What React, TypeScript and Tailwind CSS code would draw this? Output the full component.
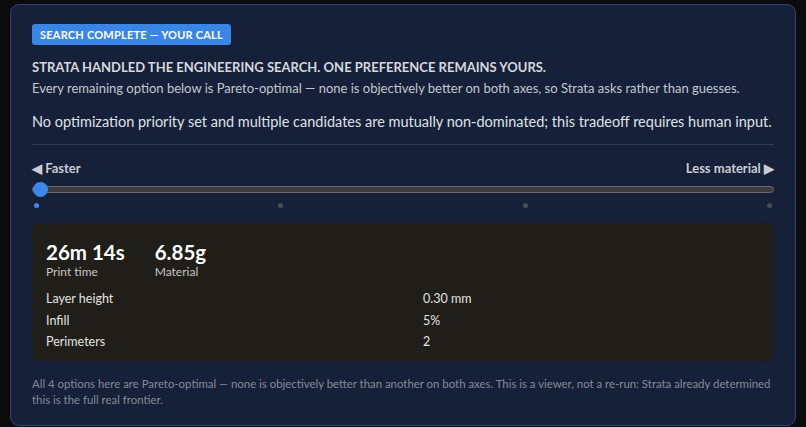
import React from "react";

const FONT = { fontFamily: 'Lato, "Noto Sans", sans-serif' };

const TICKS = [0, 1, 2, 3];

const PARAMS: [label: string, value: string][] = [
  ["Layer height", "0.30 mm"],
  ["Infill", "5%"],
  ["Perimeters", "2"],
];

export default function App() {
  return (
    <div className="h-[427px] overflow-hidden bg-[#0b0b0c] px-[10px] pt-[4px]" style={FONT}>
      <div className="rounded-[9px] border border-[#2c4670] bg-[#172039] px-[21px] pb-[17px] pt-[19px]">
        <span className="block w-fit rounded-[3px] bg-[#3a86e4] px-[8px] py-[4px] text-[11px] font-bold uppercase leading-[13px] tracking-[0.02em] text-white">
          Search complete — your call
        </span>

        <h2 className="mt-[13px] text-[13px] font-bold uppercase leading-[18px] text-[#d6d8dc]">
          Strata handled the engineering search. One preference remains yours.
        </h2>
        <p className="mt-[3px] text-[13px] leading-[18px] text-[#c3c7ce]">
          Every remaining option below is Pareto-optimal — none is objectively
          better on both axes, so Strata asks rather than guesses.
        </p>
        <p className="mt-[15px] whitespace-nowrap text-[14.5px] leading-[20px] text-[#dfe2e6]">
          No optimization priority set and multiple candidates are mutually
          non-dominated; this tradeoff requires human input.
        </p>

        <div className="mt-[12px] border-t border-[#2e3a52]" />

        <div className="mt-[14px] flex items-center justify-between text-[13px] font-bold leading-[18px] text-[#c9ccd2]">
          <span>◀ Faster</span>
          <span>Less material ▶</span>
        </div>

        <div className="relative mt-[5px] h-[15px]">
          <div className="absolute left-0 right-0 top-[4px] h-[7px] rounded-full border border-[#6b6b6b] bg-[#3d3d3d]" />
          <div className="absolute left-[1px] top-0 h-[15px] w-[15px] rounded-full bg-[#3b87ea]" />
        </div>

        <div className="mt-[6px] flex justify-between px-[2px]">
          {TICKS.map((t) => (
            <span
              key={t}
              className={`h-[5px] w-[5px] rounded-full ${t === 0 ? "bg-[#3b87ea]" : "bg-[#4a4d55]"}`}
            />
          ))}
        </div>

        <div className="mt-[15px] rounded-[7px] bg-[#1f1e19] px-[14px] pb-[8px] pt-[16px]">
          <div className="flex gap-[30px]">
            <div>
              <div className="text-[20.5px] font-bold leading-[26px] text-white">26m 14s</div>
              <div className="text-[12px] leading-[14px] text-[#c7c7c2]">Print time</div>
            </div>
            <div>
              <div className="text-[20.5px] font-bold leading-[26px] text-white">6.85g</div>
              <div className="text-[12px] leading-[14px] text-[#c7c7c2]">Material</div>
            </div>
          </div>
          <div className="mt-[9px] flex flex-col">
            {PARAMS.map(([label, value]) => (
              <div key={label} className="flex text-[12.5px] leading-[21.5px] text-[#e4e4e0]">
                <span className="w-[377px]">{label}</span>
                <span>{value}</span>
              </div>
            ))}
          </div>
        </div>

        <p className="mt-[15px] text-[11.4px] leading-[16px] text-[#858b96]">
          All 4 options here are Pareto-optimal — none is objectively better than
          another on both axes. This is a viewer, not a re-run: Strata already
          determined this is the full real frontier.
        </p>
      </div>
    </div>
  );
}
